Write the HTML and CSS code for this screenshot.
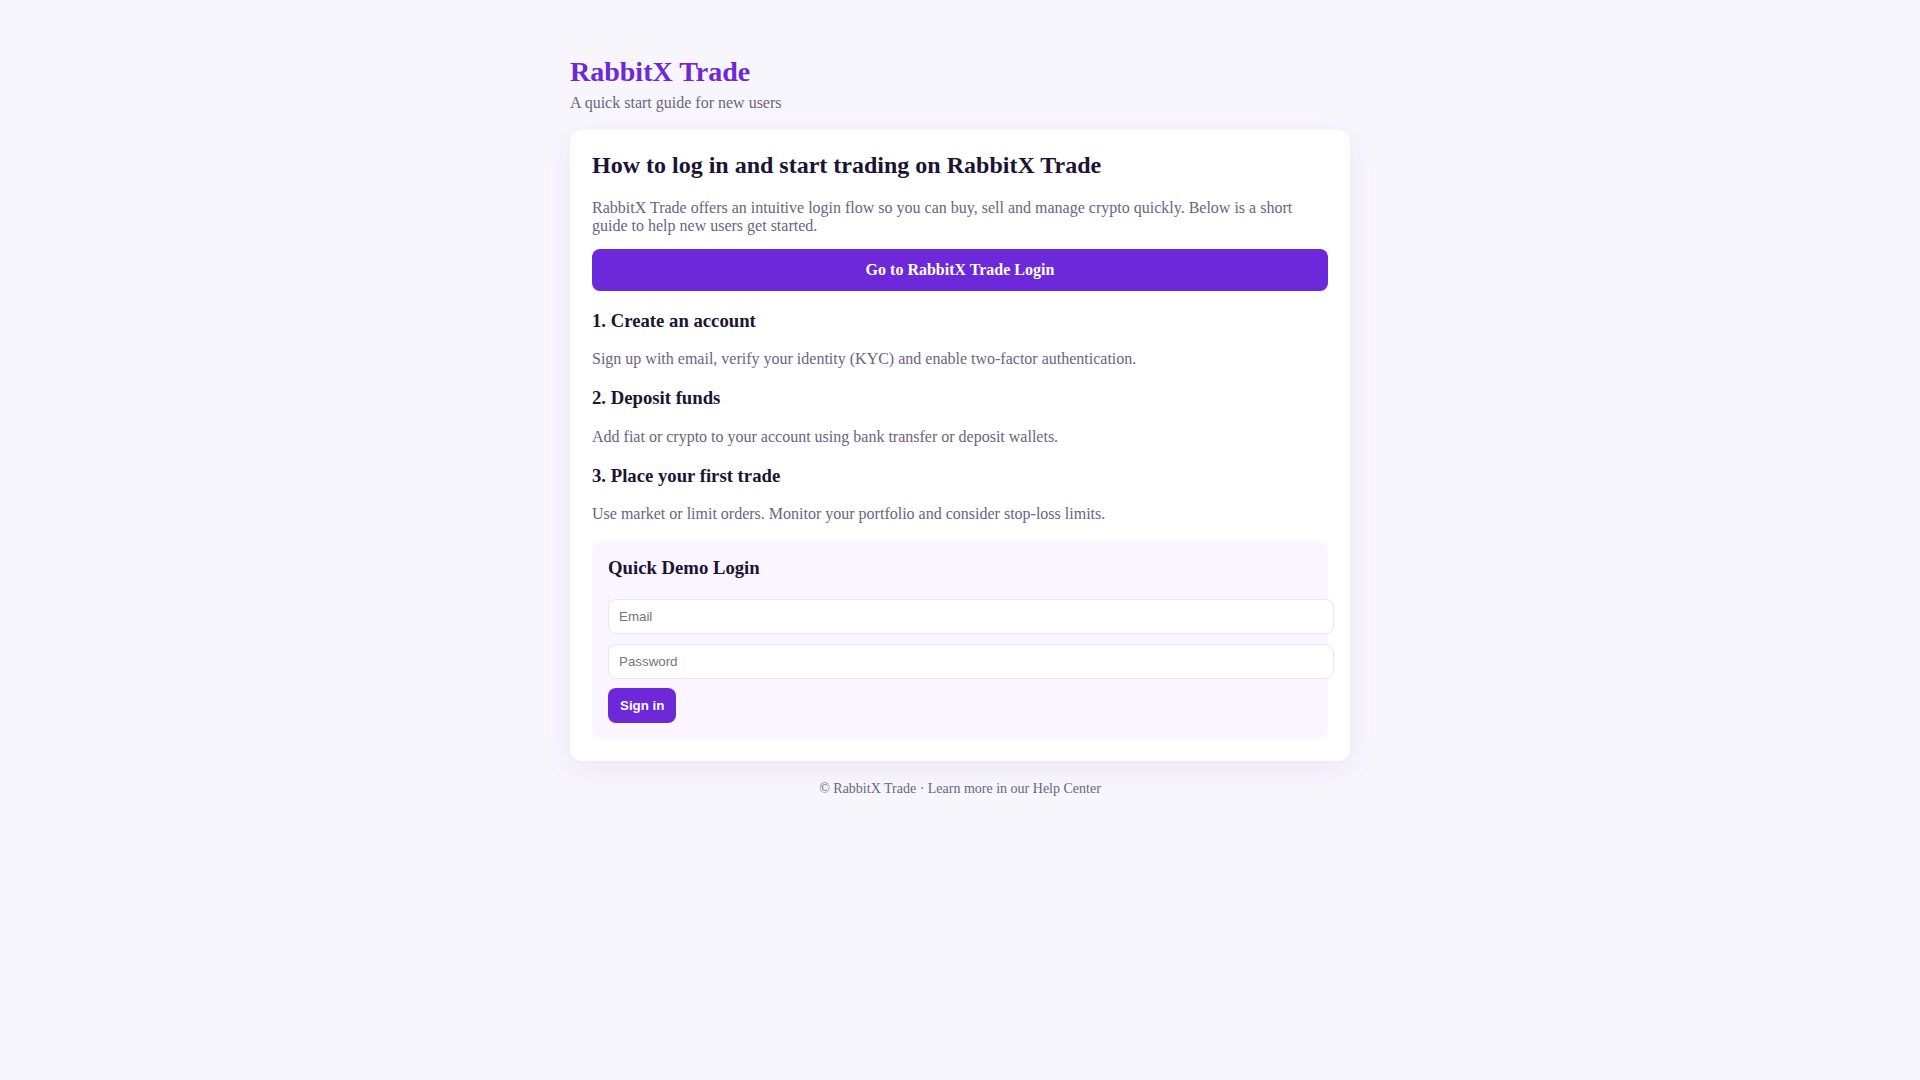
FILE: index.html
```html
<!DOCTYPE html>
<html lang="en">
<head>
<meta charset="utf-8">
<title>RabbitX Trade – Quick start guide</title>
<link rel="stylesheet" href="styles.css">
</head>
<body>
<div class="page">
  <header class="header">
    <h1 class="brand">RabbitX Trade</h1>
    <p class="tagline">A quick start guide for new users</p>
  </header>
  <main class="card">
    <h2 class="card-title">How to log in and start trading on RabbitX Trade</h2>
    <p class="text intro">RabbitX Trade offers an intuitive login flow so you can buy, sell and manage crypto quickly. Below is a short guide to help new users get started.</p>
    <a class="cta" href="#">Go to RabbitX Trade Login</a>
    <h3 class="step">1. Create an account</h3>
    <p class="text">Sign up with email, verify your identity (KYC) and enable two-factor authentication.</p>
    <h3 class="step">2. Deposit funds</h3>
    <p class="text">Add fiat or crypto to your account using bank transfer or deposit wallets.</p>
    <h3 class="step">3. Place your first trade</h3>
    <p class="text">Use market or limit orders. Monitor your portfolio and consider stop-loss limits.</p>
    <section class="demo">
      <h3 class="demo-title">Quick Demo Login</h3>
      <form class="demo-form" onsubmit="return false;">
        <input class="field" type="email" placeholder="Email">
        <input class="field field-last" type="password" placeholder="Password">
        <button class="signin" type="submit">Sign in</button>
      </form>
    </section>
  </main>
  <footer class="footer">© RabbitX Trade · Learn more in our Help Center</footer>
</div>
</body>
</html>
```

FILE: styles.css
```css
html, body {
  margin: 0;
  padding: 0;
}

body {
  background: #f8f6fd;
  font-family: "Liberation Serif", "Times New Roman", serif;
  color: #1c1433;
}

.page {
  max-width: 780px;
  margin: 0 auto;
  padding: 56px 0 40px;
}

.header {
  margin-bottom: 18px;
}

.brand {
  margin: 0 0 6px;
  font-size: 28px;
  font-weight: bold;
  color: #6d28d9;
}

.tagline {
  margin: 0;
  font-size: 16px;
  color: #6b6480;
}

.card {
  display: block;
  background: #ffffff;
  border-radius: 12px;
  padding: 22px;
  box-shadow: 0 8px 30px rgba(90, 50, 170, 0.08);
}

.card-title {
  margin: 0 0 20px;
  font-size: 24px;
  font-weight: bold;
  color: #1c1433;
}

.text {
  margin: 16px 0;
  font-size: 16px;
  color: #6b6480;
}

.intro {
  margin-bottom: 14px;
}

.cta {
  display: block;
  background: #6d28d9;
  color: #ffffff;
  text-align: center;
  font-weight: bold;
  font-size: 16px;
  text-decoration: none;
  padding: 12px;
  border-radius: 8px;
}

.step {
  margin: 18.72px 0;
  font-size: 18.72px;
  font-weight: bold;
  color: #1c1433;
}

.demo {
  margin-top: 18px;
  background: #faf5ff;
  border-radius: 10px;
  padding: 16px;
}

.demo-title {
  margin: 0 0 20px;
  font-size: 18.72px;
  font-weight: bold;
  color: #1c1433;
}

.demo-form {
  margin: 0;
}

.field {
  display: block;
  width: 100%;
  box-sizing: content-box;
  margin: 0 0 10px;
  padding: 9px 10px;
  border: 1px solid #ebe2fd;
  border-radius: 8px;
  background: #ffffff;
  font-family: "Liberation Sans", Arial, sans-serif;
  font-size: 13.333px;
  color: #1c1433;
  outline: none;
}

.field-last {
  margin-bottom: 9px;
}

.field::placeholder {
  color: #757575;
}

.signin {
  display: block;
  background: #6d28d9;
  color: #ffffff;
  border: none;
  padding: 10px 12px;
  border-radius: 8px;
  font-family: "Liberation Sans", Arial, sans-serif;
  font-size: 13.333px;
  font-weight: bold;
  cursor: pointer;
}

.footer {
  margin-top: 20px;
  text-align: center;
  font-size: 14px;
  color: #6b6480;
}
```
